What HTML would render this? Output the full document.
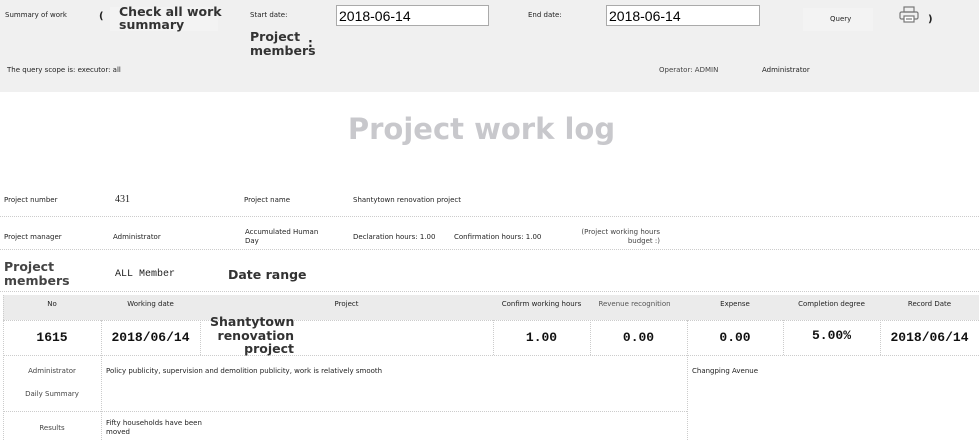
<!DOCTYPE html>
<html><head><meta charset="utf-8"><style>
*{margin:0;padding:0;box-sizing:border-box}
body{width:979px;height:440px;overflow:hidden;background:#fff;font-family:"DejaVu Sans","Liberation Sans",sans-serif;color:#222;position:relative}
.a{position:absolute;white-space:nowrap}
.s{font-size:7px}
.m{font-family:"Liberation Mono","DejaVu Sans Mono",monospace;font-weight:bold;font-size:13px;color:#111}
.big{font-size:12.5px;font-weight:bold;line-height:13px;color:#333}
.inp{position:absolute;height:21px;border:1px solid #aaa;background:#fff;font-family:"Liberation Sans",sans-serif;font-size:14px;padding:2px 2px;color:#000}
.hl{position:absolute;border-top:1px dotted #ccc;height:0}
.vl{position:absolute;border-left:1px dotted #ccc;width:0}
</style></head><body>
<div class="a" style="left:0;top:0;width:979px;height:92px;background:#f0f0f0"></div>
<div class="a s" style="left:5px;top:11px">Summary of work</div>
<div class="a" style="left:99px;top:11px;font-size:10px;font-weight:bold">(</div>
<div class="a" style="left:110px;top:7px;width:108px;height:24px;background:#f3f3f3"></div>
<div class="a big" style="left:119px;top:5px">Check all work<br>summary</div>
<div class="a s" style="left:250px;top:11px">Start date:</div>
<div class="inp" style="left:336px;top:5px;width:153px">2018-06-14</div>
<div class="a big" style="left:250px;top:30px;line-height:14px">Project<br>members</div>
<div class="a" style="left:308px;top:36px;font-size:12px;font-weight:bold">:</div>
<div class="a s" style="left:528px;top:11px">End date:</div>
<div class="inp" style="left:606px;top:5px;width:154px">2018-06-14</div>
<div class="a" style="left:803px;top:8px;width:70px;height:23px;background:#f3f3f3"></div>
<div class="a s" style="left:830px;top:15px">Query</div>
<svg class="a" style="left:899px;top:6px" width="20" height="18" viewBox="0 0 20 18" fill="none" stroke="#777" stroke-width="1.2"><rect x="5" y="1" width="10" height="5"/><rect x="1" y="6" width="18" height="7" rx="1.5"/><rect x="5" y="10" width="10" height="6" fill="#fff"/><line x1="7" y1="13" x2="13" y2="13"/></svg>
<div class="a" style="left:928px;top:14px;font-size:10px;font-weight:bold">)</div>
<div class="a s" style="left:7px;top:66px">The query scope is: executor: all</div>
<div class="a s" style="left:659px;top:66px;color:#444">Operator: ADMIN</div>
<div class="a s" style="left:762px;top:66px">Administrator</div>

<div class="a" style="left:0;top:112px;width:963px;text-align:center;font-size:29px;font-weight:bold;color:#c8c8cc">Project work log</div>

<div class="a s" style="left:4px;top:196px">Project number</div>
<div class="a" style="left:115px;top:194px;font-family:'Liberation Serif',serif;font-size:10px">431</div>
<div class="a s" style="left:244px;top:196px">Project name</div>
<div class="a s" style="left:353px;top:196px">Shantytown renovation project</div>
<div class="hl" style="left:0;top:216px;width:979px"></div>
<div class="a s" style="left:4px;top:233px">Project manager</div>
<div class="a s" style="left:113px;top:233px">Administrator</div>
<div class="a s" style="left:245px;top:228px;line-height:9px">Accumulated Human<br>Day</div>
<div class="a s" style="left:353px;top:233px">Declaration hours: 1.00</div>
<div class="a s" style="left:454px;top:233px">Confirmation hours: 1.00</div>
<div class="a s" style="left:560px;top:228px;line-height:9px;text-align:right;width:100px;color:#444">(Project working hours<br>budget :)</div>
<div class="hl" style="left:0;top:249px;width:979px"></div>
<div class="a big" style="left:4px;top:260px;color:#444;line-height:14px">Project<br>members</div>
<div class="a" style="left:115px;top:269px;font-family:'Liberation Mono',monospace;font-size:10px">ALL Member</div>
<div class="a big" style="left:228px;top:268px;color:#333">Date range</div>
<div class="hl" style="left:0;top:291px;width:979px"></div>

<div class="a" style="left:3px;top:295px;width:976px;height:25px;background:#ebebeb"></div>
<div class="a s" style="left:3px;top:300px;width:98px;text-align:center">No</div>
<div class="a s" style="left:101px;top:300px;width:99px;text-align:center">Working date</div>
<div class="a s" style="left:200px;top:300px;width:293px;text-align:center">Project</div>
<div class="a s" style="left:493px;top:300px;width:97px;text-align:center">Confirm working hours</div>
<div class="a s" style="left:586px;top:300px;width:97px;text-align:center;color:#555">Revenue recognition</div>
<div class="a s" style="left:687px;top:300px;width:96px;text-align:center">Expense</div>
<div class="a s" style="left:783px;top:300px;width:97px;text-align:center">Completion degree</div>
<div class="a s" style="left:880px;top:300px;width:99px;text-align:center">Record Date</div>

<div class="vl" style="left:3px;top:295px;height:145px"></div>
<div class="vl" style="left:101px;top:320px;height:120px"></div>
<div class="vl" style="left:200px;top:320px;height:35px"></div>
<div class="vl" style="left:493px;top:320px;height:35px"></div>
<div class="vl" style="left:590px;top:320px;height:35px"></div>
<div class="vl" style="left:687px;top:320px;height:120px"></div>
<div class="vl" style="left:783px;top:320px;height:35px"></div>
<div class="vl" style="left:880px;top:320px;height:35px"></div>
<div class="hl" style="left:3px;top:320px;width:976px"></div>
<div class="hl" style="left:3px;top:355px;width:976px"></div>
<div class="hl" style="left:3px;top:411px;width:684px"></div>

<div class="a m" style="left:3px;top:330px;width:98px;text-align:center">1615</div>
<div class="a m" style="left:101px;top:330px;width:99px;text-align:center">2018/06/14</div>
<div class="a big" style="left:210px;top:315px;width:84px;text-align:right;line-height:13.5px">Shantytown<br>renovation<br>project</div>
<div class="a m" style="left:493px;top:330px;width:97px;text-align:center">1.00</div>
<div class="a m" style="left:590px;top:330px;width:97px;text-align:center">0.00</div>
<div class="a m" style="left:687px;top:330px;width:96px;text-align:center">0.00</div>
<div class="a m" style="left:783px;top:328px;width:97px;text-align:center">5.00%</div>
<div class="a m" style="left:880px;top:330px;width:99px;text-align:center">2018/06/14</div>

<div class="a s" style="left:3px;top:367px;width:98px;text-align:center;color:#444">Administrator</div>
<div class="a s" style="left:3px;top:390px;width:98px;text-align:center;color:#444">Daily Summary</div>
<div class="a s" style="left:3px;top:424px;width:98px;text-align:center;color:#444">Results</div>
<div class="a s" style="left:106px;top:367px">Policy publicity, supervision and demolition publicity, work is relatively smooth</div>
<div class="a s" style="left:692px;top:367px">Changping Avenue</div>
<div class="a s" style="left:106px;top:419px;line-height:9px">Fifty households have been<br>moved</div>
</body></html>
